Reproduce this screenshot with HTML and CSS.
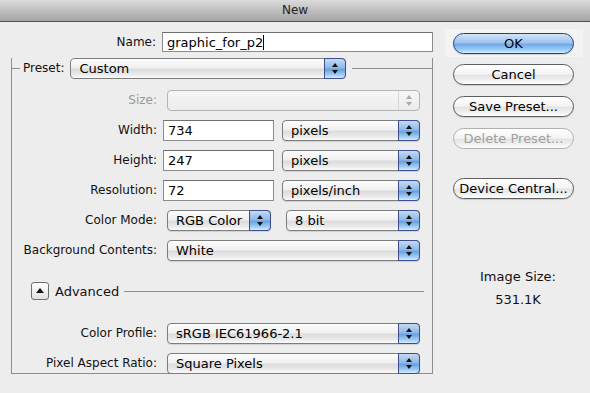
FILE: index.html
```html
<!DOCTYPE html>
<html lang="en">

<head>
    <meta charset="UTF-8">
    <title>New</title>
    <link rel="stylesheet" href="styles.css">
</head>

<body>
    <div class="titlebar">New</div>

    <div class="dialog">
        <div class="leftcol">
            <div class="row namerow">
                <span class="lab">Name:</span>
                <div class="field wide">graphic_for_p2<span class="caret"></span></div>
            </div>

            <div class="group">
                <div class="legend">
                    <span class="legtext">Preset:</span>
                    <div class="pop preset">Custom<span class="arr"></span></div>
                </div>

                <div class="row first">
                    <span class="lab dim">Size:</span>
                    <div class="pop off full"><span class="arr"></span></div>
                </div>
                <div class="row">
                    <span class="lab">Width:</span>
                    <div class="field num">734</div>
                    <div class="pop unit">pixels<span class="arr"></span></div>
                </div>
                <div class="row">
                    <span class="lab">Height:</span>
                    <div class="field num">247</div>
                    <div class="pop unit">pixels<span class="arr"></span></div>
                </div>
                <div class="row">
                    <span class="lab">Resolution:</span>
                    <div class="field num">72</div>
                    <div class="pop unit">pixels/inch<span class="arr"></span></div>
                </div>
                <div class="row">
                    <span class="lab">Color Mode:</span>
                    <div class="pop mode">RGB Color<span class="arr"></span></div>
                    <div class="pop bits">8 bit<span class="arr"></span></div>
                </div>
                <div class="row">
                    <span class="lab">Background Contents:</span>
                    <div class="pop full">White<span class="arr"></span></div>
                </div>

                <div class="adv">
                    <div class="disc"></div>
                    <span>Advanced</span>
                    <div class="rule"></div>
                </div>

                <div class="row">
                    <span class="lab">Color Profile:</span>
                    <div class="pop full">sRGB IEC61966-2.1<span class="arr"></span></div>
                </div>
                <div class="row">
                    <span class="lab">Pixel Aspect Ratio:</span>
                    <div class="pop full">Square Pixels<span class="arr"></span></div>
                </div>
            </div>
        </div>

        <div class="rightcol">
            <div class="okwrap">
                <div class="btn ok">OK</div>
            </div>
            <div class="btn cancel">Cancel</div>
            <div class="btn">Save Preset...</div>
            <div class="btn dis">Delete Preset...</div>
            <div class="btn central">Device Central...</div>

            <div class="imgsize">
                <p>Image Size:</p>
                <p>531.1K</p>
            </div>
        </div>
    </div>
</body>

</html>
```

FILE: styles.css
```css
body {
    margin: 0;
    background: #ededed;
    font-family: "DejaVu Sans", "Liberation Sans", sans-serif;
    font-size: 12px;
    color: #111;
}

.titlebar {
    height: 21px;
    line-height: 21px;
    text-align: center;
    background: linear-gradient(#dcdcdc, #b9b9b9 60%, #a6a6a6);
    border-bottom: 1px solid #4f4f4f;
    color: #222;
}

.dialog {
    display: flex;
}

/* 左边一栏 */
.leftcol {
    width: 433px;
    padding-left: 11px;
}

.row {
    display: flex;
    align-items: center;
    height: 20px;
    margin-top: 10px;
}

.row.first {
    margin-top: 11px;
}

.namerow {
    margin-top: 10px;
}

.lab {
    width: 145px;
    text-align: right;
    padding-right: 6px;
    flex-shrink: 0;
    white-space: nowrap;
}

.lab.dim {
    color: #9a9a9a;
}

.field {
    height: 19px;
    line-height: 19px;
    background: #fff;
    border: 1px solid #8c8c8c;
    border-top-color: #6e6e6e;
    box-sizing: border-box;
    padding-left: 4px;
    font-size: 13px;
    color: #000;
}

.field.wide {
    width: 271px;
    height: 20px;
}

.field.num {
    width: 111px;
    height: 21px;
    line-height: 20px;
}

.caret {
    display: inline-block;
    width: 1px;
    height: 15px;
    background: #000;
    vertical-align: -3px;
}

/* 弹出菜单 */
.pop {
    position: relative;
    height: 21px;
    line-height: 20px;
    box-sizing: border-box;
    border: 1px solid #7d7d7d;
    border-radius: 4px;
    background: linear-gradient(#fdfdfd, #f0f0f0 45%, #dcdcdc 55%, #e9e9e9 80%, #fbfbfb);
    padding-left: 8px;
    font-size: 13px;
    color: #000;
    margin-left: 4px;
    box-shadow: 0 1px 1px rgba(0, 0, 0, 0.12);
}

.pop .arr {
    position: absolute;
    right: -1px;
    top: -1px;
    bottom: -1px;
    width: 20px;
    border: 1px solid #3f4d8e;
    border-radius: 0 4px 4px 0;
    background: linear-gradient(#c4dbf3, #8fb9e8 45%, #6aa1df 55%, #a3d0f7 85%, #d5eeff);
}

.pop .arr::before,
.pop .arr::after {
    content: "";
    position: absolute;
    left: 7px;
    border-left: 3px solid transparent;
    border-right: 3px solid transparent;
}

.pop .arr::before {
    top: 4px;
    border-bottom: 4px solid #111;
}

.pop .arr::after {
    bottom: 4px;
    border-top: 4px solid #111;
}

.pop.off {
    background: linear-gradient(#f6f6f6, #ececec);
    border-color: #b4b4b4;
    box-shadow: none;
}

.pop.off .arr {
    background: none;
    border: none;
    border-left: 1px solid #d6d6d6;
    right: 0;
    top: 0;
    bottom: 0;
}

.pop.off .arr::before {
    border-bottom-color: #aaa;
}

.pop.off .arr::after {
    border-top-color: #aaa;
}

.full {
    width: 253px;
}

.unit {
    width: 138px;
    margin-left: 8px;
}

.mode {
    width: 104px;
}

.bits {
    width: 134px;
    margin-left: 15px;
}

/* 预设框 */
.group {
    margin-top: 6px;
    width: 422px;
    box-sizing: border-box;
    border: 1px solid #8e8e8e;
    border-top: none;
    height: 316px;
    position: relative;
}

.legend {
    display: flex;
    align-items: center;
    height: 21px;
    margin-left: -1px;
    background: linear-gradient(transparent 10px, #8e8e8e 10px, #8e8e8e 11px, transparent 11px);
    margin-right: -1px;
}

.legend::before {
    content: "";
    width: 1px;
    align-self: stretch;
    background: linear-gradient(transparent 10px, #8e8e8e 10px);
}

.legend::after {
    content: "";
    width: 1px;
    align-self: stretch;
    margin-left: auto;
    background: linear-gradient(transparent 10px, #8e8e8e 10px);
}

.legtext {
    background: #ededed;
    margin-left: 8px;
    padding: 0 2px 0 3px;
    line-height: 21px;
}

.preset {
    width: 276px;
    margin-left: 4px;
    outline: 6px solid #ededed;
    outline-offset: 0;
}

.adv {
    display: flex;
    align-items: center;
    margin-top: 21px;
    margin-left: 19px;
    height: 20px;
}

.disc {
    width: 18px;
    height: 18px;
    box-sizing: border-box;
    border: 1px solid #6f6f6f;
    border-radius: 3px;
    background: linear-gradient(#fefefe, #e2e2e2);
    position: relative;
    margin-right: 6px;
}

.disc::after {
    content: "";
    position: absolute;
    left: 4px;
    top: 5px;
    border-left: 4px solid transparent;
    border-right: 4px solid transparent;
    border-bottom: 5px solid #111;
}

.adv span {
    font-size: 13px;
}

.rule {
    flex: 1;
    height: 1px;
    background: #8e8e8e;
    margin-left: 5px;
    margin-right: 8px;
}

.adv + .row {
    margin-top: 22px;
}

/* 右边按钮 */
.rightcol {
    padding-left: 9px;
    display: flex;
    flex-direction: column;
}

.okwrap {
    margin-top: 7px;
    margin-left: -8px;
    width: 138px;
    height: 28px;
    background: #f3f3f3;
    display: flex;
    align-items: center;
    padding-left: 8px;
    box-sizing: border-box;
}

.btn {
    width: 121px;
    height: 21px;
    line-height: 19px;
    box-sizing: border-box;
    border: 1px solid #5e5e5e;
    border-radius: 11px;
    text-align: center;
    font-size: 13px;
    color: #000;
    background: linear-gradient(#ffffff, #f4f4f4 45%, #e4e4e4 55%, #f0f0f0 80%, #ffffff);
    box-shadow: 0 1px 1px rgba(0, 0, 0, 0.15);
    margin-top: 11px;
}

.okwrap .btn {
    margin-top: 0;
}

.btn.cancel {
    margin-top: 7px;
}

.btn.ok {
    border-color: #2a3c82;
    background: linear-gradient(#d4e4f7, #9dc3ee 45%, #74aae6 55%, #9bd0fa 85%, #d9f1ff);
}

.btn.dis {
    color: #a0a0a0;
    border-color: #b0b0b0;
    box-shadow: none;
}

.btn.central {
    margin-top: 29px;
}

.imgsize {
    text-align: center;
    margin-top: 70px;
    font-size: 13px;
}

.imgsize p {
    margin: 0 0 8px;
}
```
